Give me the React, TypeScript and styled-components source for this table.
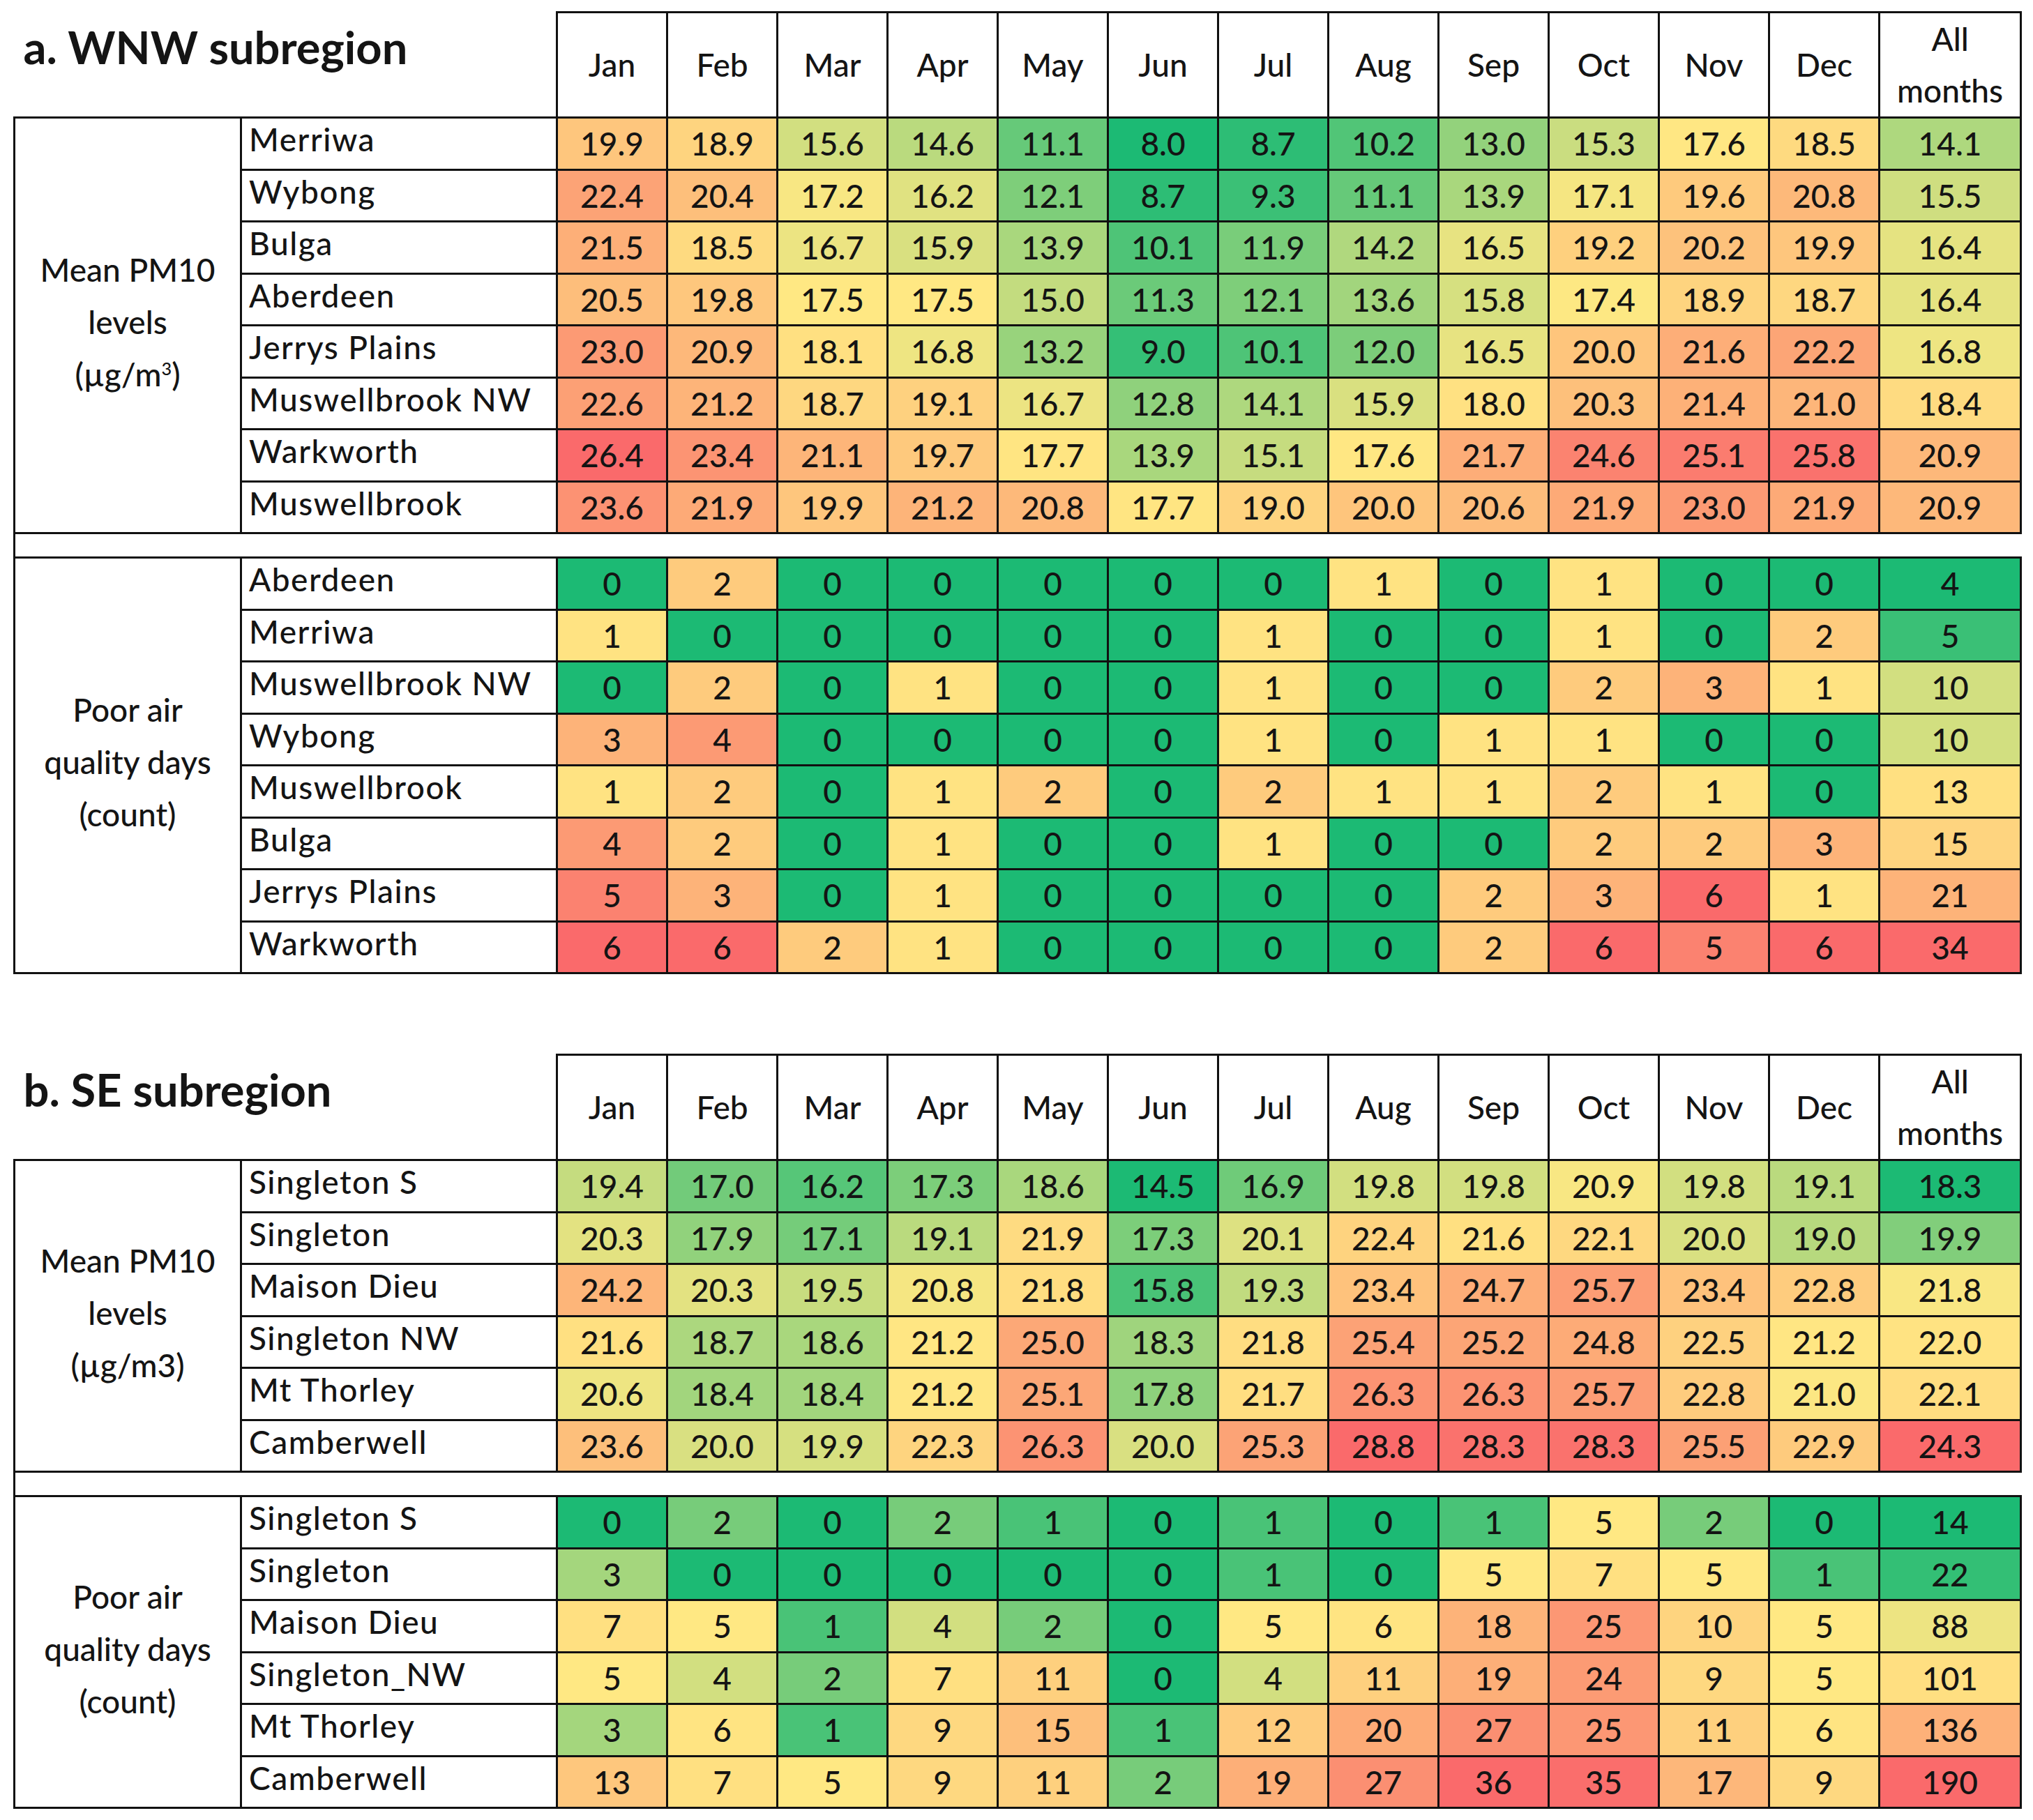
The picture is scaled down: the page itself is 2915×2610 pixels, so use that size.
import React from 'react';
import styled, { createGlobalStyle } from 'styled-components';

const GlobalStyle = createGlobalStyle`
  html, body {
    margin: 0;
    padding: 0;
    background: #ffffff;
  }
  body {
    font-family: Lato, "Liberation Sans", sans-serif;
    color: #141414;
  }
`;

type RGB = [number, number, number];

const GREEN: RGB = [28, 186, 116];
const YELLOW: RGB = [255, 232, 131];
const RED: RGB = [250, 106, 107];

interface Scale {
  min: number;
  mid: number;
  max: number;
}

const clamp = (t: number) => Math.max(0, Math.min(1, t));

const mix = (a: RGB, b: RGB, t: number) =>
  `rgb(${a.map((v, i) => Math.round(v + (b[i] - v) * clamp(t))).join(',')})`;

// excel style 3 colour scale: green - yellow - red
const colourFor = (v: number, s: Scale) =>
  v <= s.mid
    ? mix(GREEN, YELLOW, (v - s.min) / (s.mid - s.min))
    : mix(YELLOW, RED, (v - s.mid) / (s.max - s.mid));

interface Site {
  name: string;
  values: number[];
  all: number;
}

interface Block {
  label: React.ReactNode;
  decimals: number;
  scale: Scale;
  allScale: Scale;
  rows: Site[];
}

interface Section {
  title: string;
  blocks: Block[];
}

const MONTHS = ['Jan', 'Feb', 'Mar', 'Apr', 'May', 'Jun', 'Jul', 'Aug', 'Sep', 'Oct', 'Nov', 'Dec'];

const site = (name: string, nums: number[]): Site => ({
  name,
  values: nums.slice(0, 12),
  all: nums[12],
});

const SECTIONS: Section[] = [
  {
    title: 'a. WNW subregion',
    blocks: [
      {
        label: (
          <>
            Mean PM10
            <br />
            levels
            <br />
            (µg/m<sup>3</sup>)
          </>
        ),
        decimals: 1,
        scale: { min: 8.0, mid: 17.5, max: 26.4 },
        allScale: { min: 8.0, mid: 17.5, max: 26.4 },
        rows: [
          site('Merriwa', [19.9, 18.9, 15.6, 14.6, 11.1, 8.0, 8.7, 10.2, 13.0, 15.3, 17.6, 18.5, 14.1]),
          site('Wybong', [22.4, 20.4, 17.2, 16.2, 12.1, 8.7, 9.3, 11.1, 13.9, 17.1, 19.6, 20.8, 15.5]),
          site('Bulga', [21.5, 18.5, 16.7, 15.9, 13.9, 10.1, 11.9, 14.2, 16.5, 19.2, 20.2, 19.9, 16.4]),
          site('Aberdeen', [20.5, 19.8, 17.5, 17.5, 15.0, 11.3, 12.1, 13.6, 15.8, 17.4, 18.9, 18.7, 16.4]),
          site('Jerrys Plains', [23.0, 20.9, 18.1, 16.8, 13.2, 9.0, 10.1, 12.0, 16.5, 20.0, 21.6, 22.2, 16.8]),
          site('Muswellbrook NW', [22.6, 21.2, 18.7, 19.1, 16.7, 12.8, 14.1, 15.9, 18.0, 20.3, 21.4, 21.0, 18.4]),
          site('Warkworth', [26.4, 23.4, 21.1, 19.7, 17.7, 13.9, 15.1, 17.6, 21.7, 24.6, 25.1, 25.8, 20.9]),
          site('Muswellbrook', [23.6, 21.9, 19.9, 21.2, 20.8, 17.7, 19.0, 20.0, 20.6, 21.9, 23.0, 21.9, 20.9]),
        ],
      },
      {
        label: (
          <>
            Poor air
            <br />
            quality days
            <br />
            (count)
          </>
        ),
        decimals: 0,
        scale: { min: 0, mid: 0.8, max: 6 },
        allScale: { min: 4, mid: 11.5, max: 34 },
        rows: [
          site('Aberdeen', [0, 2, 0, 0, 0, 0, 0, 1, 0, 1, 0, 0, 4]),
          site('Merriwa', [1, 0, 0, 0, 0, 0, 1, 0, 0, 1, 0, 2, 5]),
          site('Muswellbrook NW', [0, 2, 0, 1, 0, 0, 1, 0, 0, 2, 3, 1, 10]),
          site('Wybong', [3, 4, 0, 0, 0, 0, 1, 0, 1, 1, 0, 0, 10]),
          site('Muswellbrook', [1, 2, 0, 1, 2, 0, 2, 1, 1, 2, 1, 0, 13]),
          site('Bulga', [4, 2, 0, 1, 0, 0, 1, 0, 0, 2, 2, 3, 15]),
          site('Jerrys Plains', [5, 3, 0, 1, 0, 0, 0, 0, 2, 3, 6, 1, 21]),
          site('Warkworth', [6, 6, 2, 1, 0, 0, 0, 0, 2, 6, 5, 6, 34]),
        ],
      },
    ],
  },
  {
    title: 'b. SE subregion',
    blocks: [
      {
        label: (
          <>
            Mean PM10
            <br />
            levels
            <br />
            (µg/m3)
          </>
        ),
        decimals: 1,
        scale: { min: 14.5, mid: 21.1, max: 28.8 },
        allScale: { min: 18.3, mid: 21.9, max: 24.3 },
        rows: [
          site('Singleton S', [19.4, 17.0, 16.2, 17.3, 18.6, 14.5, 16.9, 19.8, 19.8, 20.9, 19.8, 19.1, 18.3]),
          site('Singleton', [20.3, 17.9, 17.1, 19.1, 21.9, 17.3, 20.1, 22.4, 21.6, 22.1, 20.0, 19.0, 19.9]),
          site('Maison Dieu', [24.2, 20.3, 19.5, 20.8, 21.8, 15.8, 19.3, 23.4, 24.7, 25.7, 23.4, 22.8, 21.8]),
          site('Singleton NW', [21.6, 18.7, 18.6, 21.2, 25.0, 18.3, 21.8, 25.4, 25.2, 24.8, 22.5, 21.2, 22.0]),
          site('Mt Thorley', [20.6, 18.4, 18.4, 21.2, 25.1, 17.8, 21.7, 26.3, 26.3, 25.7, 22.8, 21.0, 22.1]),
          site('Camberwell', [23.6, 20.0, 19.9, 22.3, 26.3, 20.0, 25.3, 28.8, 28.3, 28.3, 25.5, 22.9, 24.3]),
        ],
      },
      {
        label: (
          <>
            Poor air
            <br />
            quality days
            <br />
            (count)
          </>
        ),
        decimals: 0,
        scale: { min: 0, mid: 5, max: 36 },
        allScale: { min: 14, mid: 94.5, max: 190 },
        rows: [
          site('Singleton S', [0, 2, 0, 2, 1, 0, 1, 0, 1, 5, 2, 0, 14]),
          site('Singleton', [3, 0, 0, 0, 0, 0, 1, 0, 5, 7, 5, 1, 22]),
          site('Maison Dieu', [7, 5, 1, 4, 2, 0, 5, 6, 18, 25, 10, 5, 88]),
          site('Singleton_NW', [5, 4, 2, 7, 11, 0, 4, 11, 19, 24, 9, 5, 101]),
          site('Mt Thorley', [3, 6, 1, 9, 15, 1, 12, 20, 27, 25, 11, 6, 136]),
          site('Camberwell', [13, 7, 5, 9, 11, 2, 19, 27, 36, 35, 17, 9, 190]),
        ],
      },
    ],
  },
];

const LINE = '3px solid #111';

const Page = styled.div`
  padding: 16px 0 16px 19px;
  display: flex;
  flex-direction: column;
  gap: 114px;
`;

const Table = styled.table`
  border-collapse: collapse;
  table-layout: fixed;
  width: 2877px;
  font-size: 46px;
  font-weight: 500;
`;

const TitleCell = styled.th`
  border: none;
  padding: 10px 0 0 13px;
  text-align: left;
  vertical-align: top;
  font-size: 65px;
  font-weight: 700;
  white-space: nowrap;
`;

const HeadCell = styled.th`
  border: ${LINE};
  height: 146px;
  padding: 0;
  text-align: center;
  vertical-align: middle;
  font-weight: 500;
  line-height: 74px;
`;

const BodyRow = styled.tr`
  height: 74.5px;
`;

const GroupCell = styled.td`
  border: ${LINE};
  padding: 0 0 10px;
  text-align: center;
  vertical-align: middle;
  line-height: 75px;
  white-space: nowrap;

  sup {
    font-size: 0.55em;
    line-height: 0;
  }
`;

const NameCell = styled.td`
  border: ${LINE};
  padding: 0 0 12px 10px;
  text-align: left;
  vertical-align: middle;
  white-space: nowrap;
  letter-spacing: 1.5px;
`;

const ValueCell = styled.td<{ $bg: string }>`
  border: ${LINE};
  padding: 0;
  text-align: center;
  vertical-align: middle;
  background: ${(p) => p.$bg};
`;

const GapCell = styled.td`
  height: 32px;
  padding: 0;
  border-top: ${LINE};
  border-bottom: ${LINE};
  border-left: ${LINE};
  border-right: none;
`;

const BlockRows: React.FC<{ block: Block }> = ({ block }) => (
  <>
    {block.rows.map((row, i) => (
      <BodyRow key={row.name}>
        {i === 0 && <GroupCell rowSpan={block.rows.length}>{block.label}</GroupCell>}
        <NameCell>{row.name}</NameCell>
        {row.values.map((v, m) => (
          <ValueCell key={MONTHS[m]} $bg={colourFor(v, block.scale)}>
            {v.toFixed(block.decimals)}
          </ValueCell>
        ))}
        <ValueCell $bg={colourFor(row.all, block.allScale)}>{row.all.toFixed(block.decimals)}</ValueCell>
      </BodyRow>
    ))}
  </>
);

const SectionTable: React.FC<{ section: Section }> = ({ section }) => (
  <Table>
    <colgroup>
      <col style={{ width: 325 }} />
      <col style={{ width: 453 }} />
      {MONTHS.map((m) => (
        <col key={m} style={{ width: 158 }} />
      ))}
      <col style={{ width: 203 }} />
    </colgroup>
    <thead>
      <tr>
        <TitleCell colSpan={2}>{section.title}</TitleCell>
        {MONTHS.map((m) => (
          <HeadCell key={m}>{m}</HeadCell>
        ))}
        <HeadCell>
          All
          <br />
          months
        </HeadCell>
      </tr>
    </thead>
    <tbody>
      <BlockRows block={section.blocks[0]} />
      <tr>
        <GapCell colSpan={15} />
      </tr>
      <BlockRows block={section.blocks[1]} />
    </tbody>
  </Table>
);

const App: React.FC = () => (
  <>
    <GlobalStyle />
    <Page>
      {SECTIONS.map((s) => (
        <SectionTable key={s.title} section={s} />
      ))}
    </Page>
  </>
);

export default App;
